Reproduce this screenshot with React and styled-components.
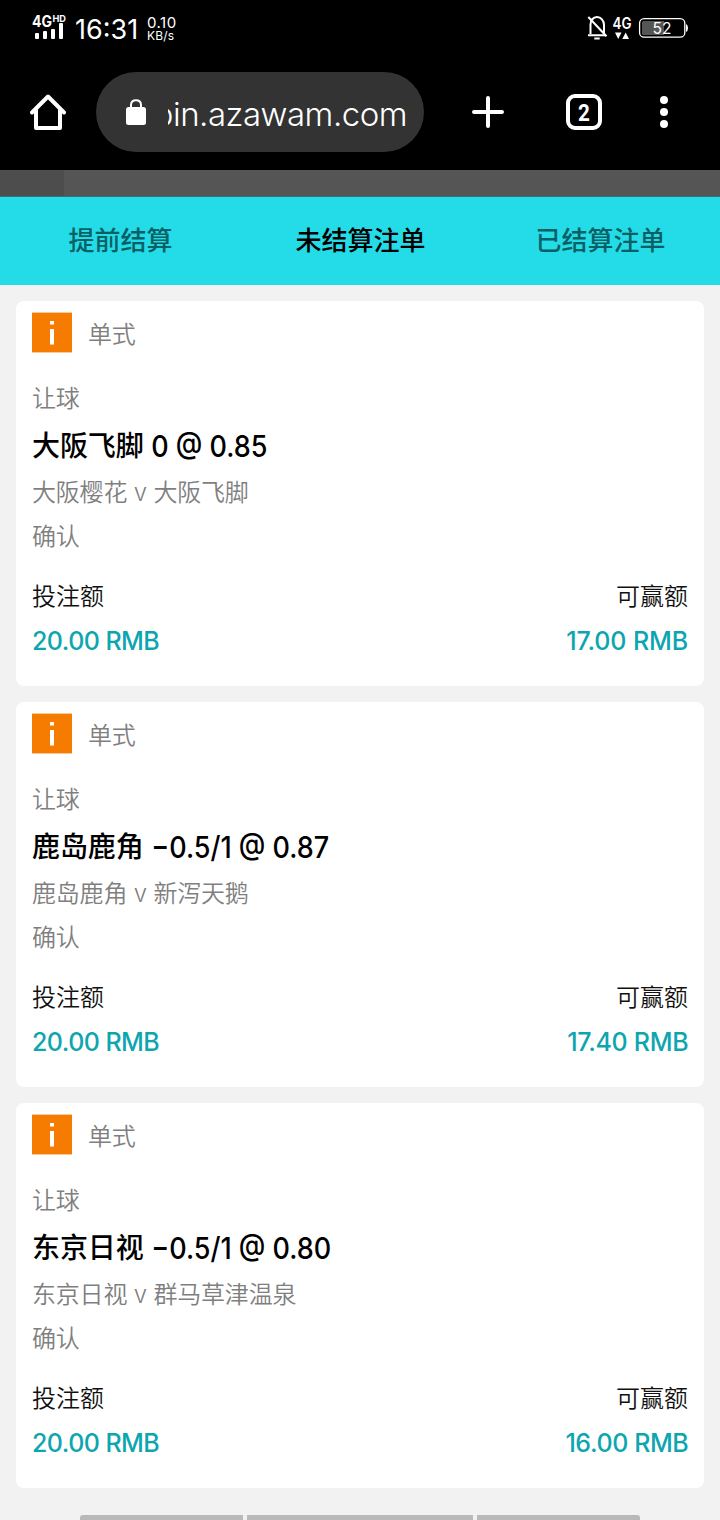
import React from 'react';
import styled, { createGlobalStyle } from 'styled-components';

const GlobalStyle = createGlobalStyle`
  * { box-sizing: border-box; }
  body {
    margin: 0;
    background: #f2f2f2;
    font-family: Inter, "Noto Sans CJK SC", sans-serif;
  }
`;

const Screen = styled.div`
  width: 720px;
  height: 1520px;
  display: flex;
  flex-direction: column;
  overflow: hidden;
  background: #f2f2f2;
`;

const StatusBar = styled.div`
  height: 56px;
  flex: none;
  display: flex;
  justify-content: space-between;
  padding: 0 32px;
  background: #000;
  color: #fff;
`;

const StatusGroup = styled.div`
  display: flex;
  align-items: flex-start;
`;

const Clock = styled.div`
  margin: 14px 0 0 7px;
  width: 65px;
  font-size: 27px;
  line-height: 32px;
  letter-spacing: 0;
  white-space: nowrap;
`;

const NetSpeed = styled.div`
  margin: 16px 0 0 7px;
  font-size: 15px;
  line-height: 13px;
  letter-spacing: 0.5px;
  white-space: nowrap;
`;

const SpeedUnit = styled.div`
  font-size: 12px;
  line-height: 13px;
  letter-spacing: 0.2px;
`;

const BrowserBar = styled.div`
  height: 114px;
  flex: none;
  display: flex;
  align-items: center;
  padding: 0 0 2px;
  background: #000;
  color: #fff;
`;

const IconSlot = styled.div`
  width: ${(p) => p.$width}px;
  display: flex;
  justify-content: center;
`;

const AddressPill = styled.div`
  width: 328px;
  height: 80px;
  border-radius: 40px;
  background: #333;
  display: flex;
  align-items: center;
  padding: 0 17px 0 29px;
`;

const AddressClip = styled.div`
  flex: 1;
  margin-left: 21px;
  overflow: hidden;
  display: flex;
  justify-content: flex-end;
  font-size: 33px;
  font-weight: 300;
  line-height: 44px;
  padding-top: 3px;
  letter-spacing: -0.5px;
  white-space: nowrap;
`;

const TabCount = styled.div`
  width: 36px;
  height: 36px;
  border: 4px solid #fff;
  border-radius: 9px;
  display: flex;
  align-items: center;
  justify-content: center;
  padding-top: 1px;
  font: 700 24px/24px Roboto, sans-serif;
  span { transform: scaleX(0.86); }
`;

const Backdrop = styled.div`
  height: 27px;
  flex: none;
  background: #555;
  border-bottom: 1px solid #3f6e70;
  &::before {
    content: '';
    display: block;
    width: 64px;
    height: 26px;
    background: #4d4d4d;
  }
`;

const Tabs = styled.nav`
  height: 88px;
  flex: none;
  display: grid;
  grid-template-columns: repeat(3, 1fr);
  background: #24dce7;
`;

const Tab = styled.div`
  text-align: center;
  padding-left: 1px;
  font-size: 26px;
  line-height: 87px;
  font-weight: 500;
  color: ${(p) => (p.$active ? '#000' : '#096064')};
`;

const BetList = styled.main`
  display: flex;
  flex-direction: column;
  gap: 16px;
  padding: 16px 16px 0;
`;

const Card = styled.article`
  height: 385px;
  padding: 0 16px;
  border-radius: 8px;
  background: #fff;
`;

const CardHeader = styled.div`
  height: 76px;
  display: flex;
  gap: 16px;
  padding-top: 11px;
`;

const Line = styled.div`
  height: ${(p) => p.$height || 44}px;
  line-height: ${(p) => p.$height || 44}px;
  display: flex;
  justify-content: space-between;
  font-size: 24px;
  font-weight: 350;
  color: ${(p) => p.$color || '#7f7f7f'};
  white-space: pre;
`;

const BetType = styled(Line)`
  letter-spacing: -0.3px;
`;

const HeaderType = styled(BetType)`
  padding-top: 1px;
`;

const Selection = styled(Line)`
  justify-content: flex-start;
  font-size: 28px;
  font-weight: 500;
`;

const Team = styled.span`
  letter-spacing: -0.1px;
`;

const Odds = styled.span`
  font-size: 30px;
  font-feature-settings: "case" 1;
  transform: scaleX(0.9);
  transform-origin: left center;
`;

const Match = styled(Line)`
  justify-content: flex-start;
  letter-spacing: -0.2px;
`;

const AmountLabels = styled(Line)`
  margin-top: 16px;
`;

const Amounts = styled(Line)`
  font-size: 25px;
  font-weight: 500;
`;

const Amount = styled.span`
  letter-spacing: ${(p) => p.$tracking}px;
  margin-right: ${(p) => p.$tracking}px;
`;

const BottomHandles = styled.div`
  margin-top: auto;
  height: 5px;
  flex: none;
  display: flex;
  gap: 4px;
  padding: 0 80px;
`;

const Handle = styled.div`
  width: ${(p) => p.$width}px;
  background: #b9b9b9;
  border-radius: ${(p) => p.$radius || '0'};
`;

const SignalIcon = () => (
  <svg width="36" height="56" viewBox="0 0 36 56" fill="#fff">
    <text x="0" y="26.5" fontSize="15.5" fontWeight="700" textLength="20" lengthAdjust="spacingAndGlyphs">4G</text>
    <text x="20.5" y="22" fontSize="9.5" fontWeight="700" textLength="13.5" lengthAdjust="spacingAndGlyphs">HD</text>
    <rect x="3" y="33" width="4" height="6" rx="1" />
    <rect x="11" y="31" width="4" height="8" rx="1" />
    <rect x="19" y="29" width="4" height="10" rx="1" />
    <rect x="27" y="23" width="4" height="16" rx="1" />
  </svg>
);

const StatusIcons = () => (
  <svg width="106" height="56" viewBox="582 0 106 56" fill="none">
    <g stroke="#fff" strokeWidth="2">
      <path d="M590.5 34V24.5C590.5 20.5 593 17 597 17C601 17 604 20.5 604 25V34" />
      <path d="M588 35.3H606M594.3 38.5H599.7" />
      <path d="M588.3 17L606.5 36.2" />
    </g>
    <text x="612.5" y="28.5" fill="#fff" fontSize="15.5" fontWeight="600" textLength="19" lengthAdjust="spacingAndGlyphs">4G</text>
    <path d="M615 32.5H621.5L618.2 39ZM622.3 39H629L625.7 32.5Z" fill="#fff" />
    <rect x="639.6" y="18.6" width="45.2" height="18.6" rx="4.5" stroke="#fff" strokeWidth="1.3" />
    <path d="M643.5 21H664V35H643.5Q642 35 642 33.5V22.5Q642 21 643.5 21" fill="#555" />
    <path d="M686 24Q688 25 688 28Q688 31 686 32Z" fill="#fff" />
    <text x="652.5" y="34" fill="#fff" fontSize="16.5" textLength="19" lengthAdjust="spacingAndGlyphs">52</text>
  </svg>
);

const HomeIcon = () => (
  <svg width="36" height="38" viewBox="0 0 36 38" fill="none" stroke="#fff" strokeWidth="4" strokeLinecap="round" strokeLinejoin="round">
    <path d="M2 19.5L18 3.5L34 19.5M6 17V35H30V17" />
  </svg>
);

const LockIcon = () => (
  <svg width="22" height="28" viewBox="0 0 22 28">
    <rect x="1" y="9" width="20" height="18" rx="2.5" fill="#fff" />
    <path d="M6 10V7Q6 2.2 11 2.2Q16 2.2 16 7V10" fill="none" stroke="#fff" strokeWidth="2" />
  </svg>
);

const PlusIcon = () => (
  <svg width="32" height="32" viewBox="0 0 32 32" stroke="#fff" strokeWidth="4" strokeLinecap="round">
    <path d="M16 2V30M2 16H30" />
  </svg>
);

const MoreIcon = () => (
  <svg width="8" height="32" viewBox="0 0 8 32" fill="#fff">
    <circle cx="4" cy="4" r="4" />
    <circle cx="4" cy="16" r="4" />
    <circle cx="4" cy="28" r="4" />
  </svg>
);

const InfoIcon = () => (
  <svg width="40" height="41" viewBox="0 0 40 41">
    <rect y="0.6" width="40" height="39.8" fill="#f57c00" />
    <path d="M18 9H22V12.5H18ZM18 17H22V32.5H18Z" fill="#fff" />
  </svg>
);

const bets = [
  { team: '大阪飞脚', odds: ' 0 @ 0.85', home: '大阪樱花', away: '大阪飞脚', win: '17.00', tracking: -0.1 },
  { team: '鹿岛鹿角', odds: ' −0.5/1 @ 0.87', home: '鹿岛鹿角', away: '新泻天鹅', win: '17.40', tracking: -0.3 },
  { team: '东京日视', odds: ' −0.5/1 @ 0.80', home: '东京日视', away: '群马草津温泉', win: '16.00', tracking: -0.4 },
];

const BetCard = ({ bet }) => (
  <Card>
    <CardHeader>
      <InfoIcon />
      <HeaderType>单式</HeaderType>
    </CardHeader>
    <BetType>让球</BetType>
    <Selection $height={50} $color="#000"><Team>{bet.team}</Team><Odds>{bet.odds}</Odds></Selection>
    <Match>{bet.home} v {bet.away}</Match>
    <BetType>确认</BetType>
    <AmountLabels $color="#111"><span>投注额</span><span>可赢额</span></AmountLabels>
    <Amounts $color="#0da6af">
      <Amount $tracking={-0.55}>20.00 RMB</Amount>
      <Amount $tracking={bet.tracking}>{bet.win} RMB</Amount>
    </Amounts>
  </Card>
);

export default function App() {
  return (
    <Screen>
      <GlobalStyle />
      <StatusBar>
        <StatusGroup>
          <SignalIcon />
          <Clock>16:31</Clock>
          <NetSpeed>0.10<SpeedUnit>KB/s</SpeedUnit></NetSpeed>
        </StatusGroup>
        <StatusIcons />
      </StatusBar>
      <BrowserBar>
        <IconSlot $width={96}><HomeIcon /></IconSlot>
        <AddressPill>
          <LockIcon />
          <AddressClip><span>bin.azawam.com</span></AddressClip>
        </AddressPill>
        <IconSlot $width={128}><PlusIcon /></IconSlot>
        <IconSlot $width={64}><TabCount><span>2</span></TabCount></IconSlot>
        <IconSlot $width={96}><MoreIcon /></IconSlot>
      </BrowserBar>
      <Backdrop />
      <Tabs>
        <Tab>提前结算</Tab>
        <Tab $active>未结算注单</Tab>
        <Tab>已结算注单</Tab>
      </Tabs>
      <BetList>
        {bets.map((bet) => <BetCard key={bet.team} bet={bet} />)}
      </BetList>
      <BottomHandles>
        <Handle $width={163} $radius="3px 0 0 0" />
        <Handle $width={226} />
        <Handle $width={163} $radius="0 3px 0 0" />
      </BottomHandles>
    </Screen>
  );
}
